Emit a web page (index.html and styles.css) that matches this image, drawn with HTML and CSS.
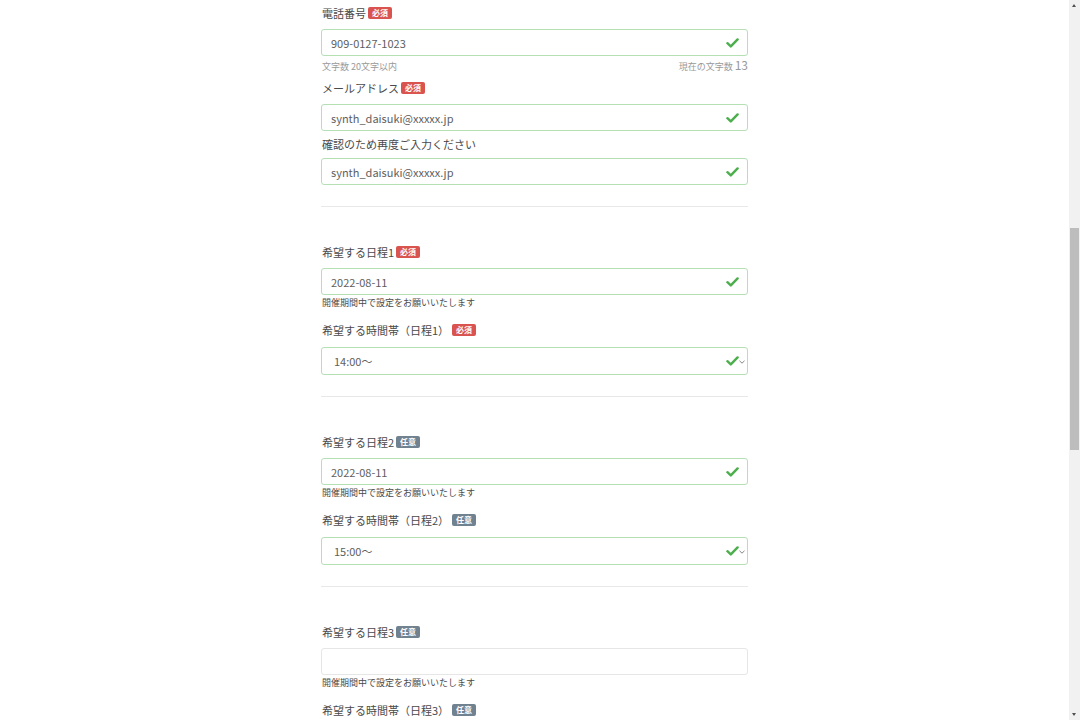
FILE: index.html
```html
<!DOCTYPE html>
<html lang="ja">
<head>
  <meta charset="UTF-8">
  <meta name="viewport" content="width=device-width, initial-scale=1.0">
  <title>お申し込みフォーム</title>
  <link rel="stylesheet" href="styles.css">
</head>
<body>
  <div class="page">
    <form class="form">
      <div class="field first">
        <label class="label">電話番号<span class="badge required">必須</span></label>
        <div class="control valid">
          <input type="text" value="909-0127-1023">
          <svg class="check" width="13" height="10" viewBox="0 0 13 10"><polyline points="1.4,5.2 4.8,8.4 11.6,1.4"/></svg>
        </div>
        <div class="count">
          <span>文字数 20文字以内</span>
          <span>現在の文字数 <b>13</b></span>
        </div>
      </div>

      <div class="field mail">
        <label class="label">メールアドレス<span class="badge required">必須</span></label>
        <div class="control valid">
          <input type="text" value="synth_daisuki@xxxxx.jp">
          <svg class="check" width="13" height="10" viewBox="0 0 13 10"><polyline points="1.4,5.2 4.8,8.4 11.6,1.4"/></svg>
        </div>
      </div>
      <div class="field confirm">
        <label class="label plain">確認のため再度ご入力ください</label>
        <div class="control valid">
          <input type="text" value="synth_daisuki@xxxxx.jp">
          <svg class="check" width="13" height="10" viewBox="0 0 13 10"><polyline points="1.4,5.2 4.8,8.4 11.6,1.4"/></svg>
        </div>
      </div>

      <hr class="divider">

      <!-- 日程1 -->
      <div class="field date">
        <label class="label">希望する日程1<span class="badge required">必須</span></label>
        <div class="control valid">
          <input type="text" value="2022-08-11">
          <svg class="check" width="13" height="10" viewBox="0 0 13 10"><polyline points="1.4,5.2 4.8,8.4 11.6,1.4"/></svg>
        </div>
        <p class="note">開催期間中で設定をお願いいたします</p>
      </div>
      <div class="field time">
        <label class="label">希望する時間帯（日程1）<span class="badge required wide">必須</span></label>
        <div class="control valid select">
          <span class="value">14:00〜</span>
          <svg class="check" width="13" height="10" viewBox="0 0 13 10"><polyline points="1.4,5.2 4.8,8.4 11.6,1.4"/></svg>
          <svg class="caret" width="6" height="4" viewBox="0 0 6 4"><polyline points="0.5,0.8 3,3.2 5.5,0.8"/></svg>
        </div>
      </div>

      <hr class="divider">

      <!-- 日程2 -->
      <div class="field date">
        <label class="label">希望する日程2<span class="badge optional">任意</span></label>
        <div class="control valid">
          <input type="text" value="2022-08-11">
          <svg class="check" width="13" height="10" viewBox="0 0 13 10"><polyline points="1.4,5.2 4.8,8.4 11.6,1.4"/></svg>
        </div>
        <p class="note">開催期間中で設定をお願いいたします</p>
      </div>
      <div class="field time">
        <label class="label">希望する時間帯（日程2）<span class="badge optional wide">任意</span></label>
        <div class="control valid select">
          <span class="value">15:00〜</span>
          <svg class="check" width="13" height="10" viewBox="0 0 13 10"><polyline points="1.4,5.2 4.8,8.4 11.6,1.4"/></svg>
          <svg class="caret" width="6" height="4" viewBox="0 0 6 4"><polyline points="0.5,0.8 3,3.2 5.5,0.8"/></svg>
        </div>
      </div>

      <hr class="divider">

      <!-- 日程3 -->
      <div class="field date">
        <label class="label">希望する日程3<span class="badge optional">任意</span></label>
        <div class="control">
          <input type="text" value="">
        </div>
        <p class="note">開催期間中で設定をお願いいたします</p>
      </div>
      <div class="field time">
        <label class="label">希望する時間帯（日程3）<span class="badge optional wide">任意</span></label>
      </div>
    </form>
  </div>

  <div class="scrollbar">
    <span class="arrow up"></span>
    <span class="thumb"></span>
    <span class="arrow down"></span>
  </div>
</body>
</html>
```

FILE: styles.css
```css
html, body {
  height: 720px;
  overflow: hidden;
}
body {
  margin: 0;
  padding: 0;
  background-color: #fff;
  font-family: "Noto Sans CJK JP", "Noto Sans", sans-serif;
  color: #4a4a4a;
}
.page {
  margin-right: 11px;
}
.form {
  width: 427px;
  margin: 0 auto;
  padding-top: 4px;
}
.field {
  margin-top: 11px;
}
.field.first {
  margin-top: 0;
}
.field.mail {
  margin-top: 6px;
}
.field.confirm {
  margin-top: 5px;
}
.field.date {
  margin-top: 36px;
}
.label {
  display: flex;
  align-items: center;
  height: 18px;
  margin: 0 0 7px 1px;
  font-size: 11px;
  line-height: 18px;
  color: #4a4a4a;
}
.label.plain {
  height: 16px;
  line-height: 16px;
  margin-bottom: 6px;
}
.field.time .label {
  margin-bottom: 8px;
}
.badge {
  display: inline-block;
  height: 12px;
  margin-left: 2px;
  padding: 0 4px;
  border-radius: 2px;
  font-size: 8px;
  font-weight: bold;
  line-height: 12px;
  color: #fff;
}
.badge.wide {
  margin-left: 3px;
}
.badge.required {
  background-color: #d9534f;
}
.badge.optional {
  background-color: #70818f;
}
.control {
  position: relative;
  display: flex;
  align-items: center;
  height: 27px;
  border: 1px solid #e6e6e6;
  border-radius: 3px;
  box-sizing: border-box;
  background-color: #fff;
}
.control.valid {
  border-color: #b4e0b4;
}
.control input {
  width: 100%;
  height: 100%;
  padding: 0 30px 0 9px;
  border: 0;
  outline: 0;
  background: transparent;
  box-sizing: border-box;
  font-family: "Noto Sans CJK JP", "Noto Sans", sans-serif;
  font-size: 11px;
  color: #5e5e5e;
}
.control.select {
  height: 28px;
}
.control .value {
  padding-left: 12px;
  font-size: 11px;
  color: #5e5e5e;
}
.check {
  position: absolute;
  right: 8px;
  top: 50%;
  margin-top: -5px;
  fill: none;
  stroke: #4cae4c;
  stroke-width: 2.4;
  stroke-linecap: round;
  stroke-linejoin: round;
}
.caret {
  position: absolute;
  right: 2px;
  top: 50%;
  margin-top: -1px;
  fill: none;
  stroke: #777;
  stroke-width: 0.9;
}
.count {
  display: flex;
  justify-content: space-between;
  align-items: baseline;
  height: 16px;
  margin-top: 1px;
  padding: 0 0 0 1px;
  font-size: 9px;
  line-height: 16px;
  color: #999;
}
.count b {
  font-weight: normal;
  font-size: 12px;
}
.note {
  height: 14px;
  margin: 1px 0 0 1px;
  font-size: 9px;
  line-height: 14px;
  color: #4a4a4a;
}
.divider {
  height: 1px;
  margin: 21px 0 0;
  border: 0;
  background-color: #e8e8e8;
}

/* fake browser scrollbar */
.scrollbar {
  position: fixed;
  top: 0;
  right: 0;
  width: 11px;
  height: 720px;
  background-color: #f1f1f1;
}
.thumb {
  position: absolute;
  left: 1px;
  right: 1px;
  top: 228px;
  height: 222px;
  background-color: #bdbdbd;
}
.arrow {
  position: absolute;
  left: 3px;
  width: 0;
  height: 0;
  border-left: 2.5px solid transparent;
  border-right: 2.5px solid transparent;
}
.arrow.up {
  top: 4px;
  border-bottom: 3px solid #505050;
}
.arrow.down {
  bottom: 4px;
  border-top: 3px solid #505050;
}
```
